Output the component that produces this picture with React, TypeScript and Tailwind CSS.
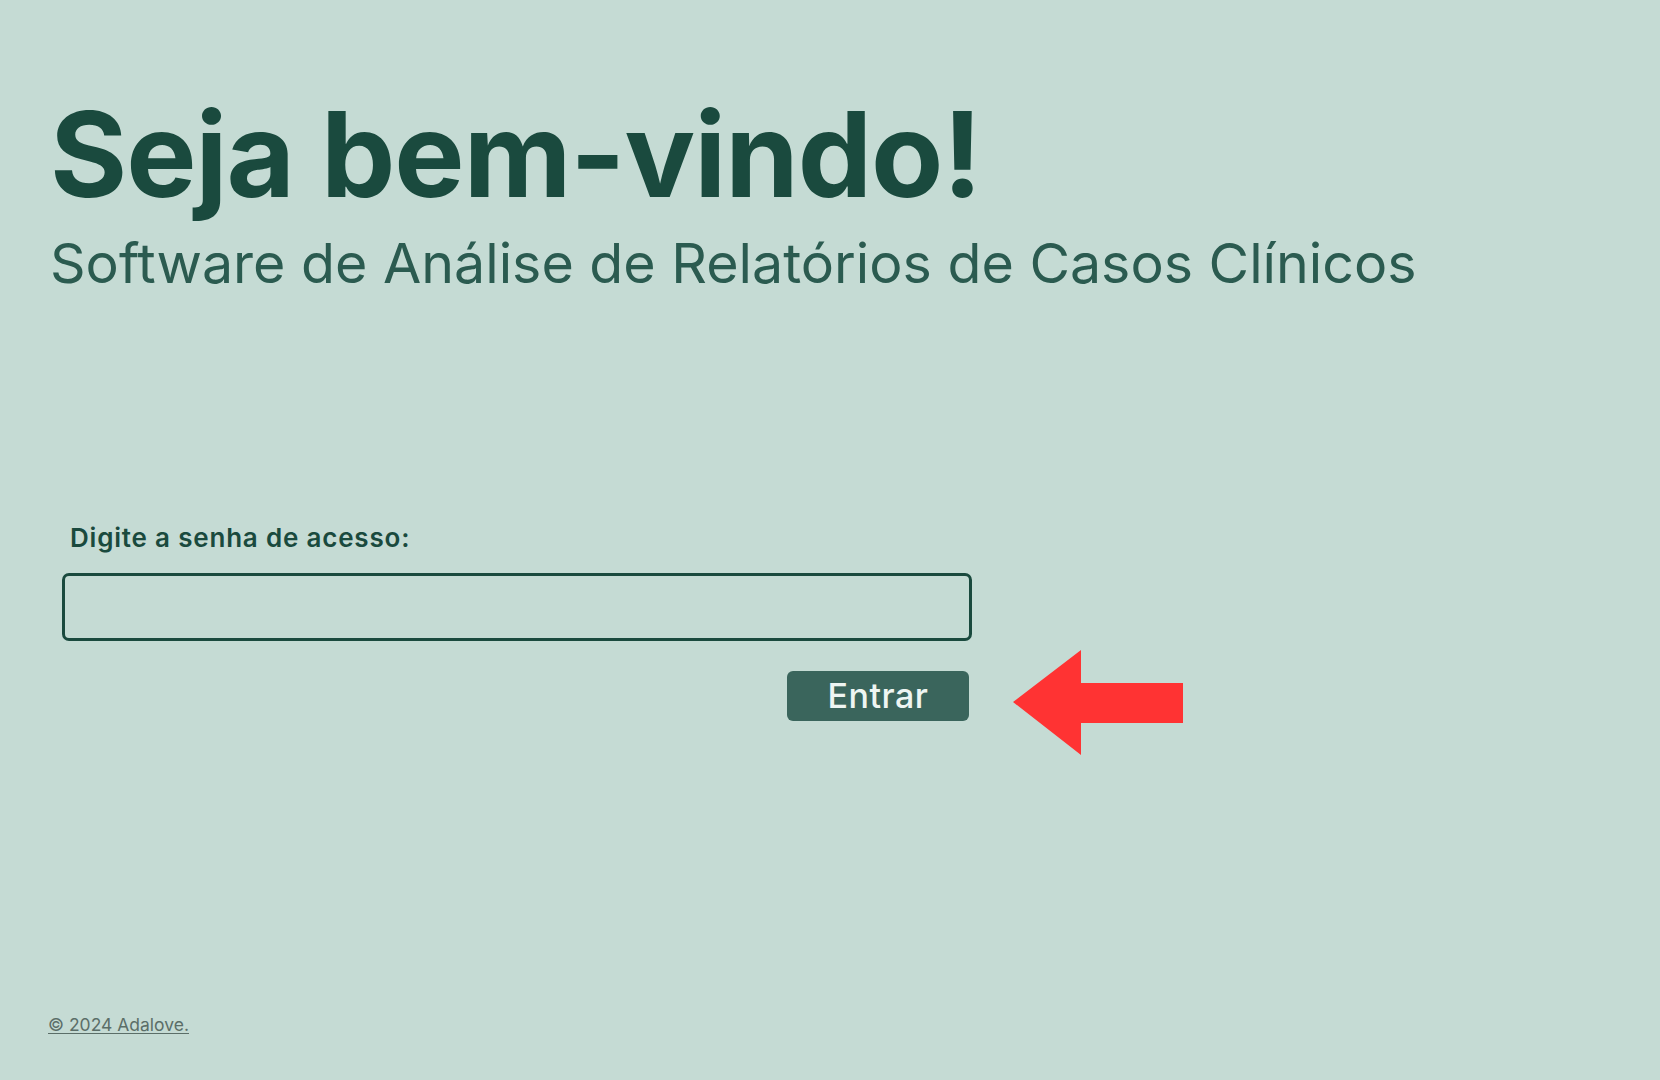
export default function App() {
    return (
        <div className="min-h-screen bg-[#c5dbd4] font-['Inter','Noto_Sans',sans-serif] flex flex-col">
            <main className="flex-1 pl-[50px]">
                <header className="pt-[84px]">
                    <h1 className="text-[118px] leading-[140px] font-bold tracking-[-1px] text-[#1a4a3e]">Seja bem-vindo!</h1>
                    <p className="mt-[4px] text-[55.5px] leading-[70px] font-normal text-[#2b5b50]">
                        Software de Análise de Relatórios de Casos Clínicos
                    </p>
                </header>

                <form className="mt-[224px] flex flex-col" onSubmit={(e) => e.preventDefault()}>
                    <label className="ml-[20px] text-[26px] leading-[32px] font-semibold tracking-[0.8px] text-[#1a4a3e]">
                        Digite a senha de acesso:
                    </label>
                    <input
                        type="password"
                        className="mt-[19px] ml-[12px] w-[910px] h-[68px] rounded-[7px] border-[3px] border-[#1a4a3e] bg-transparent outline-none px-4 text-2xl"
                    />
                    <div className="mt-[30px] ml-[737px] relative w-[182px]">
                        <button className="w-[182px] h-[50px] rounded-[6px] bg-[#3a655c] text-[#eef5f2] text-[34px] leading-none font-medium tracking-[0.5px]">
                            Entrar
                        </button>
                        {/* seta de destaque */}
                        <ArrowLeft />
                    </div>
                </form>
            </main>

            <footer className="pl-[48px] pb-[42px]">
                <a className="text-[17.5px] text-[#5b6e68] underline underline-offset-2">© 2024 Adalove.</a>
            </footer>
        </div>
    );
}

function ArrowLeft() {
    return (
        <svg width="172" height="106" viewBox="0 0 172 106" className="absolute left-[226px] top-[-21px]">
            <polygon points="0,52 68,0 68,33 170,33 170,73 68,73 68,105" fill="#ff3333" />
        </svg>
    );
}
